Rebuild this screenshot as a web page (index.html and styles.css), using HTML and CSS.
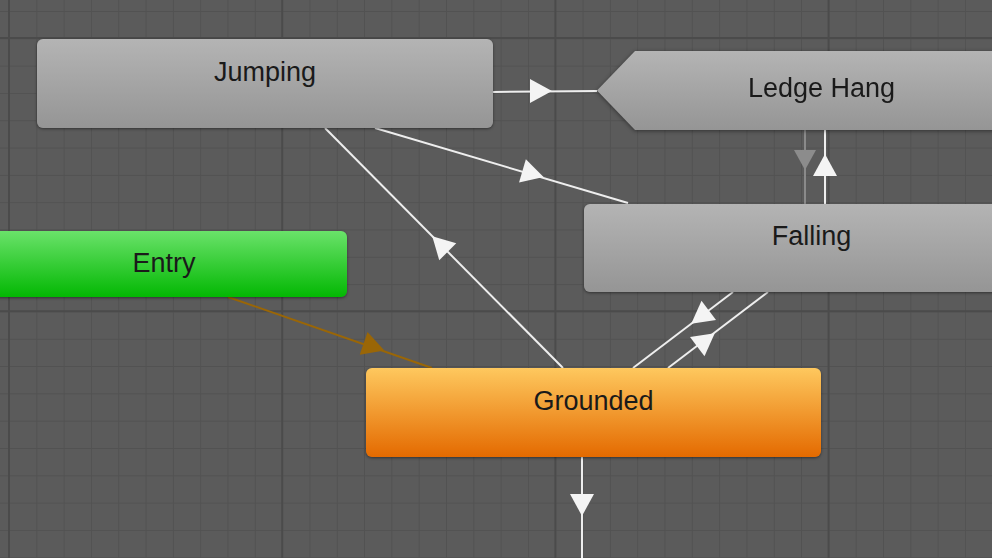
FILE: index.html
```html
<!DOCTYPE html>
<html lang="en">
  <head>
    <meta charset="UTF-8" />
    <meta name="viewport" content="width=device-width, initial-scale=1.0" />
    <title>Animator</title>
    <link rel="stylesheet" href="styles.css">
  </head>
  <body>
    <div class="graph">
      <!-- transitions -->
      <svg class="edges" width="992" height="558" viewBox="0 0 992 558">
        <g class="edge">
          <line x1="493" y1="92" x2="597" y2="91" />
          <polygon points="-11,-12 11,0 -11,12" transform="translate(541 91)" />
        </g>
        <g class="edge">
          <line x1="375" y1="128" x2="628" y2="203" />
          <polygon points="-11,-12 11,0 -11,12" transform="translate(533 174) rotate(16.5)" />
        </g>
        <g class="edge">
          <line x1="563" y1="368" x2="325" y2="128" />
          <polygon points="-11,-12 11,0 -11,12" transform="translate(440 244) rotate(-134.8)" />
        </g>
        <g class="edge muted">
          <line x1="805" y1="130" x2="805" y2="204" />
          <polygon points="-10,-11 10,0 -10,11" transform="translate(805 160) rotate(90)" />
        </g>
        <g class="edge">
          <line x1="825" y1="130" x2="825" y2="204" />
          <polygon points="-11,-12 11,0 -11,12" transform="translate(825 165) rotate(-90)" />
        </g>
        <g class="edge">
          <line x1="733" y1="292" x2="633" y2="368" />
          <polygon points="-11,-12 11,0 -11,12" transform="translate(700 317) rotate(142.8)" />
        </g>
        <g class="edge">
          <line x1="668" y1="368" x2="768" y2="292" />
          <polygon points="-11,-12 11,0 -11,12" transform="translate(706 340) rotate(-37.2)" />
        </g>
        <g class="edge entry-edge">
          <line x1="228" y1="297" x2="432" y2="368" />
          <polygon points="-11,-12 11,0 -11,12" transform="translate(374 347) rotate(19.2)" />
        </g>
        <g class="edge">
          <line x1="582" y1="457" x2="582" y2="558" />
          <polygon points="-11,-12 11,0 -11,12" transform="translate(582 505) rotate(90)" />
        </g>
      </svg>

      <!-- states -->
      <div class="node state jumping">Jumping</div>
      <div class="hang-wrap">
        <div class="node state ledge">Ledge Hang</div>
      </div>
      <div class="node state falling">Falling</div>
      <div class="node entry">Entry</div>
      <div class="node default grounded">Grounded</div>
    </div>
  </body>
</html>
```

FILE: styles.css
```css
* {
  margin: 0;
  padding: 0;
  box-sizing: border-box;
}
html, body {
  width: 992px;
  height: 558px;
  overflow: hidden;
  background: #5b5b5b;
}
.graph {
  position: relative;
  width: 992px;
  height: 558px;
  overflow: hidden;
  background-color: #5b5b5b;
  background-image:
    linear-gradient(to right, #4b4b4b 0, #4b4b4b 2px, transparent 2px),
    linear-gradient(to bottom, #4b4b4b 0, #4b4b4b 2px, transparent 2px),
    linear-gradient(to right, #525252 0, #525252 1px, transparent 1px),
    linear-gradient(to bottom, #525252 0, #525252 1px, transparent 1px);
  background-size:
    273.2px 273.2px,
    273.2px 273.2px,
    27.32px 27.32px,
    27.32px 27.32px;
  background-position:
    8px 37px,
    8px 37px,
    9px 11px,
    9px 11px;
  font-family: "Liberation Sans", Arial, sans-serif;
}
.edges {
  position: absolute;
  left: 0;
  top: 0;
}
.edge line {
  stroke: #eeeeee;
  stroke-width: 2;
}
.edge polygon {
  fill: #f4f4f4;
}
.edge.muted line {
  stroke: #8a8a8a;
}
.edge.muted polygon {
  fill: #8c8c8c;
}
.edge.entry-edge line {
  stroke: #9a6606;
}
.edge.entry-edge polygon {
  fill: #9a6606;
}
.node {
  position: absolute;
  height: 89px;
  padding-top: 17px;
  border-radius: 6px;
  font-size: 27px;
  line-height: 32px;
  text-align: center;
  color: #1a1a1a;
  box-shadow: 0 1px 3px rgba(0, 0, 0, 0.45);
}
.state {
  background: linear-gradient(to bottom, #b4b4b4, #959595);
}
.jumping {
  left: 37px;
  top: 39px;
  width: 456px;
}
.falling {
  left: 584px;
  top: 204px;
  width: 455px;
  height: 88px;
  padding-top: 16px;
}
.hang-wrap {
  position: absolute;
  left: 597px;
  top: 51px;
  filter: drop-shadow(0 1px 2px rgba(0, 0, 0, 0.45));
}
.ledge {
  position: static;
  width: 449px;
  height: 79px;
  padding-top: 21px;
  border-radius: 0;
  box-shadow: none;
  clip-path: polygon(38px 0, 100% 0, 100% 100%, 38px 100%, 0 50%);
}
.entry {
  left: -19px;
  top: 231px;
  width: 366px;
  height: 66px;
  padding-top: 16px;
  background: linear-gradient(to bottom, #6ae26a, #03b803);
}
.default {
  background: linear-gradient(to bottom, #fec85e, #e46a00);
}
.grounded {
  left: 366px;
  top: 368px;
  width: 455px;
}
```
